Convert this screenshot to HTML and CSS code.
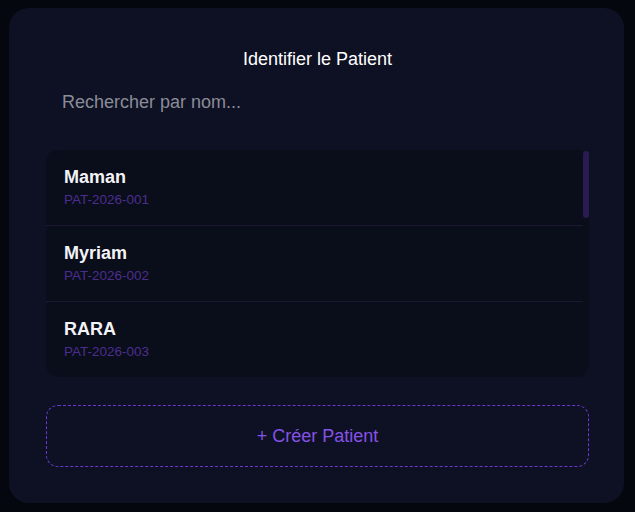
FILE: index.html
```html
<!DOCTYPE html>
<html lang="fr">
<head>
<meta charset="utf-8">
<title>Identifier le Patient</title>
<link rel="stylesheet" href="styles.css">
</head>
<body>
<div class="card">
  <h2 class="title">Identifier le Patient</h2>
  <input class="search" type="text" placeholder="Rechercher par nom...">
  <div class="list">
    <ul class="items">
      <li class="item"><div class="name">Maman</div><div class="pid">PAT-2026-001</div></li>
      <li class="item"><div class="name">Myriam</div><div class="pid">PAT-2026-002</div></li>
      <li class="item"><div class="name">RARA</div><div class="pid">PAT-2026-003</div></li>
      <li class="item"><div class="name">Sofia</div><div class="pid">PAT-2026-004</div></li>
      <li class="item"><div class="name">Karim</div><div class="pid">PAT-2026-005</div></li>
      <li class="item"><div class="name">Lina</div><div class="pid">PAT-2026-006</div></li>
      <li class="item"><div class="name">Yanis</div><div class="pid">PAT-2026-007</div></li>
      <li class="item"><div class="name">Nadia</div><div class="pid">PAT-2026-008</div></li>
      <li class="item"><div class="name">Omar</div><div class="pid">PAT-2026-009</div></li>
      <li class="item"><div class="name">Sarah</div><div class="pid">PAT-2026-010</div></li>
    </ul>
    <div class="thumb"></div>
  </div>
  <button class="create">+ Créer Patient</button>
</div>
</body>
</html>
```
FILE: styles.css
```css
html, body {
  margin: 0;
  padding: 0;
  background: #05070e;
}
body {
  padding: 8px 11px 9px 9px;
  font-family: "Liberation Sans", Arial, sans-serif;
}
.card {
  background: #0e1124;
  border-radius: 20px;
  padding: 36px 35px 36px 37px;
  display: flex;
  flex-direction: column;
  height: 495px;
  box-sizing: border-box;
}
.title {
  margin: 0;
  color: #ffffff;
  font-size: 18px;
  font-weight: 400;
  line-height: 30px;
  text-align: center;
}
.search {
  margin-top: 4px;
  height: 48px;
  box-sizing: border-box;
  background: transparent;
  border: none;
  outline: none;
  padding: 0 16px;
  font-family: "Liberation Sans", Arial, sans-serif;
  font-size: 18px;
  color: #e5e7eb;
}
.search::placeholder {
  color: #8a8c97;
}
.list {
  position: relative;
  margin-top: 24px;
  height: 227px;
  background: #0a0e1b;
  border-radius: 12px;
}
.items {
  list-style: none;
  margin: 0 6px 0 0;
  padding: 0;
  height: 227px;
  overflow-y: auto;
  scrollbar-width: none;
}
.items::-webkit-scrollbar {
  display: none;
}
.thumb {
  position: absolute;
  top: 1px;
  right: 0;
  width: 6px;
  height: 67px;
  border-radius: 3px;
  background: #2a1a4f;
}
.item {
  padding: 17px 18px;
  border-bottom: 1px solid #1c1833;
}
.item:last-child {
  border-bottom: none;
}
.name {
  color: #f3f3f7;
  font-size: 18px;
  font-weight: 600;
  line-height: 20px;
}
.pid {
  margin-top: 5px;
  color: #4b2d8e;
  font-size: 13.5px;
  line-height: 16px;
}
.create {
  margin-top: 28px;
  height: 62px;
  background: transparent;
  border: 1px dashed #6a3ad0;
  border-radius: 12px;
  color: #8552e6;
  font-family: "Liberation Sans", Arial, sans-serif;
  font-size: 18px;
  cursor: pointer;
}
```
